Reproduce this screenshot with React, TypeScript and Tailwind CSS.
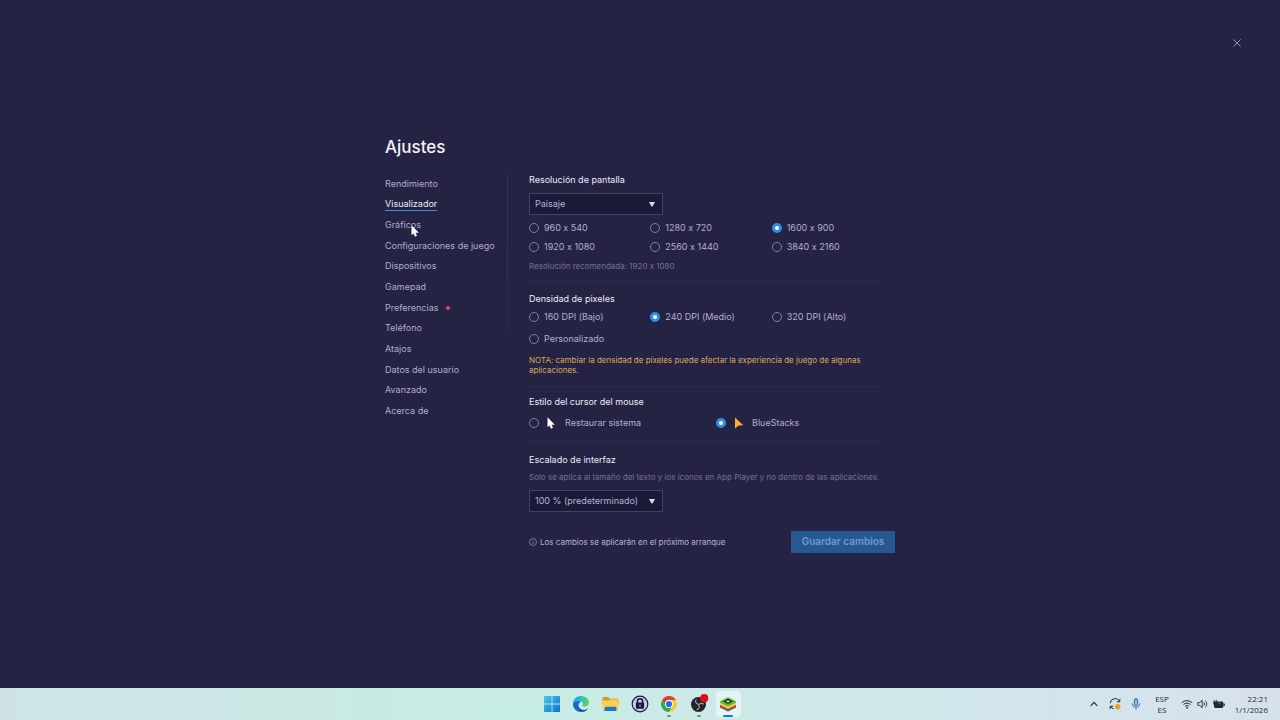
import { useState, type ReactNode } from "react";

const sections = [
  "Rendimiento",
  "Visualizador",
  "Gráficos",
  "Configuraciones de juego",
  "Dispositivos",
  "Gamepad",
  "Preferencias",
  "Teléfono",
  "Atajos",
  "Datos del usuario",
  "Avanzado",
  "Acerca de",
];

function Pointer({ className, fill }: { className: string; fill: string }) {
  return (
    <svg viewBox="0 0 8 12" className={className} aria-hidden="true">
      <path d="M0.5 0.3V10.2L2.6 8.4L4 11.7L6 10.8L4.6 7.7H7.8Z" fill={fill} />
    </svg>
  );
}

function Heading({ children, className = "" }: { children: ReactNode; className?: string }) {
  return <h2 className={`text-[9px] leading-[13px] text-[#eceaf8] ${className}`}>{children}</h2>;
}

function Divider({ className }: { className: string }) {
  return <hr className={`mr-4 h-px border-0 bg-[#2d2b4c] ${className}`} />;
}

type RadioProps = {
  name: string;
  label: string;
  value: string;
  onChange: (v: string) => void;
  icon?: ReactNode;
};

function Radio({ name, label, value, onChange, icon }: RadioProps) {
  return (
    <label className="flex h-[19px] items-center text-[9px] text-[#b0aecf]">
      <input
        type="radio"
        name={name}
        checked={value === label}
        onChange={() => onChange(label)}
        className="size-[10px] shrink-0 appearance-none rounded-full border border-[#8280a3] checked:border-3 checked:border-[#2f8fe6] checked:bg-white"
      />
      {icon}
      <span className={icon ? "ml-[10px]" : "ml-[5px]"}>{label}</span>
    </label>
  );
}

function Dropdown({ label, options, className }: { label: string; options: string[]; className: string }) {
  return (
    <div className={`relative w-[134px] ${className}`}>
      <select
        aria-label={label}
        className="block h-[22px] w-full appearance-none border border-[#413f63] bg-[#1b1938] px-[5px] text-[9px] text-[#b5b3d3]"
      >
        {options.map((o) => (
          <option key={o}>{o}</option>
        ))}
      </select>
      <svg viewBox="0 0 6 5" className="pointer-events-none absolute top-[9px] right-2 h-[5px] w-[6px]" aria-hidden="true">
        <path d="M0 0H6L3.5 4.6H2.5Z" fill="#dcdbee" />
      </svg>
    </div>
  );
}

function Settings() {
  const [resolution, setResolution] = useState("1600 x 900");
  const [dpi, setDpi] = useState("240 DPI (Medio)");
  const [cursor, setCursor] = useState("BlueStacks");
  return (
    <section className="w-full max-w-[510px]">
      <h1 className="mb-[17px] text-[17px] leading-[18px] font-medium text-[#f3f2fb]">Ajustes</h1>
      <div className="flex">
        <nav className="mt-px grid h-[248px] w-[122px] shrink-0 auto-rows-fr text-[9px] leading-[12px] text-[#aeaccf]">
          {sections.map((s) => (
            <div key={s} className="relative flex items-center">
              <a
                href="#"
                className={s === "Visualizador" ? "border-b border-[#2f8fe6] text-[#eceaf8]" : ""}
              >
                {s}
              </a>
              {s === "Preferencias" && <span className="ml-2 size-1 rounded-full bg-[#d9504f]" />}
              {s === "Gráficos" && (
                <Pointer className="absolute top-[10px] left-[26px] h-3 w-2" fill="#ffffff" />
              )}
            </div>
          ))}
        </nav>
        <div className="mt-0.5 h-[156px] w-px shrink-0 bg-linear-to-b from-[#37355a] to-[#2b294b]" />
        <div className="ml-[21px] min-w-0 grow">
          <Heading>Resolución de pantalla</Heading>
          <Dropdown label="Resolución de pantalla" options={["Paisaje", "Retrato"]} className="mt-[7px]" />
          <div className="mt-1 grid w-[364px] grid-cols-3">
            {["960 x 540", "1280 x 720", "1600 x 900", "1920 x 1080", "2560 x 1440", "3840 x 2160"].map((r) => (
              <Radio key={r} name="resolution" label={r} value={resolution} onChange={setResolution} />
            ))}
          </div>
          <p className="mt-[3px] text-[8px] leading-[12px] text-[#716f95]">Resolución recomendada: 1920 x 1080</p>
          <Divider className="mt-[9px]" />
          <Heading className="mt-[10px]">Densidad de pixeles</Heading>
          <div className="mt-[3px] grid w-[364px] grid-cols-3 gap-y-[3px]">
            {["160 DPI (Bajo)", "240 DPI (Medio)", "320 DPI (Alto)", "Personalizado"].map((d) => (
              <Radio key={d} name="dpi" label={d} value={dpi} onChange={setDpi} />
            ))}
          </div>
          <p className="mt-[6px] mr-4 text-[8px] leading-[10px] text-[#dea658]">
            NOTA: cambiar la densidad de píxeles puede afectar la experiencia de juego de algunas aplicaciones.
          </p>
          <Divider className="mt-[11px]" />
          <Heading className="mt-2">Estilo del cursor del mouse</Heading>
          <div className="mt-[6px] grid grid-cols-[187px_1fr]">
            <Radio
              name="cursor"
              label="Restaurar sistema"
              value={cursor}
              onChange={setCursor}
              icon={<Pointer className="ml-2 h-3 w-2" fill="#ffffff" />}
            />
            <Radio
              name="cursor"
              label="BlueStacks"
              value={cursor}
              onChange={setCursor}
              icon={
                <svg viewBox="0 0 8 12" className="ml-2 h-3 w-2 overflow-visible" aria-hidden="true">
                  <path d="M1 0.5L9.3 8.2L4.8 8.4L1 11.5Z" fill="#f3b236" />
                </svg>
              }
            />
          </div>
          <Divider className="mt-2" />
          <Heading className="mt-[11px]">Escalado de interfaz</Heading>
          <p className="mt-[5px] text-[8px] leading-[12px] whitespace-nowrap text-[#716f95]">
            Solo se aplica al tamaño del texto y los íconos en App Player y no dentro de las aplicaciones.
          </p>
          <Dropdown
            label="Escalado de interfaz"
            options={["100 % (predeterminado)", "125 %", "150 %"]}
            className="mt-[7px]"
          />
          <div className="mt-[19px] flex items-center justify-between">
            <p className="flex items-center gap-[3px] text-[8px] text-[#b5b3d3]">
              <svg viewBox="0 0 8 8" className="size-2" fill="none" stroke="#8e8cae" strokeWidth="0.8" aria-hidden="true">
                <circle cx="4" cy="4" r="3.5" />
                <path d="M4 3.5V6M4 2V2.8" />
              </svg>
              Los cambios se aplicarán en el próximo arranque
            </p>
            <button type="button" className="h-[22px] w-[104px] bg-[#275891] text-[10px] font-semibold text-[#6d9bd0]">
              Guardar cambios
            </button>
          </div>
        </div>
      </div>
    </section>
  );
}

function WindowsIcon() {
  return (
    <svg viewBox="0 0 16 16" className="size-4">
      <defs>
        <linearGradient id="win" x1="0" y1="0" x2="1" y2="1">
          <stop offset="0" stopColor="#4cc4f0" />
          <stop offset="1" stopColor="#0a72cc" />
        </linearGradient>
      </defs>
      <path d="M0 0H7.6V7.6H0ZM8.4 0H16V7.6H8.4ZM0 8.4H7.6V16H0ZM8.4 8.4H16V16H8.4Z" fill="url(#win)" />
    </svg>
  );
}

function EdgeIcon() {
  return (
    <svg viewBox="0 0 16 16" className="size-4">
      <defs>
        <linearGradient id="edgeTop" x1="0" y1="0.3" x2="1" y2="0.5">
          <stop offset="0" stopColor="#1a9fe0" />
          <stop offset="0.55" stopColor="#2cc3c4" />
          <stop offset="1" stopColor="#63d64e" />
        </linearGradient>
      </defs>
      <path d="M0 8C0 3.4 3.6 0 8 0C12.8 0 16 3.2 16 6.6C16 9.2 14 10.7 11.8 10.7C9.6 10.7 9 9.9 9.5 9C10.6 7 9 4.8 6.2 4.8C3.2 4.8 0.8 6.3 0 8Z" fill="url(#edgeTop)" />
      <path d="M0 8C0.6 6 2.9 4.8 5.8 4.9C7 5 7.8 5.4 8.4 6C6.6 6 5.4 7.5 5.4 9.4C5.4 12.2 8 14.2 11 14C12.7 13.8 13.6 13.3 14.7 12.4C13.2 14.7 10.8 16 8 16C3.5 16 0 12.5 0 8Z" fill="#1769c4" />
      <path d="M5.8 8C4.8 10.8 6.8 14 10.8 14C12.7 13.9 13.6 13.3 14.7 12.4C14 13.8 12.6 15 11 15.5C6.8 15.8 3.8 12.2 5.8 8Z" fill="#124a97" />
    </svg>
  );
}

function FolderIcon() {
  return (
    <svg viewBox="0 0 17 16" className="h-4 w-[17px]">
      <path d="M0.5 2.2Q0.5 1 1.7 1H6L7.8 2.8H15.3Q16.5 2.8 16.5 4V8H0.5Z" fill="#d99a1e" />
      <path d="M0.5 4.6H7L8.5 3.4H16.5V13.5Q16.5 14.7 15.3 14.7H1.7Q0.5 14.7 0.5 13.5Z" fill="#fbcf52" />
      <path d="M2.6 15V12.2Q2.6 10.8 4 10.8H13Q14.4 10.8 14.4 12.2V15Z" fill="#1d76c9" />
    </svg>
  );
}

function LockIcon() {
  return (
    <svg viewBox="0 0 18 18" className="size-[18px]">
      <circle cx="9" cy="9" r="7.8" fill="#c7d0ef" stroke="#1c2142" strokeWidth="1.2" />
      <path d="M6.4 8V6.2Q6.4 3.7 9 3.7Q11.6 3.7 11.6 6.2V8" fill="none" stroke="#171b35" strokeWidth="1.6" />
      <rect x="4.9" y="7.6" width="8.2" height="6.2" rx="0.8" fill="#171b35" />
      <path d="M9 9.5V11.8" stroke="#c7d0ef" strokeWidth="1" />
    </svg>
  );
}

function ChromeIcon() {
  return (
    <svg viewBox="0 0 16 16" className="size-4">
      <circle cx="8" cy="8" r="8" fill="#fff" />
      <path d="M1.07 4A8 8 0 0 1 14.93 4H8A4 4 0 0 0 4.54 10Z" fill="#e33b2e" />
      <path d="M14.93 4A8 8 0 0 1 8 16L11.46 10A4 4 0 0 0 8 4Z" fill="#fcc934" />
      <path d="M8 16A8 8 0 0 1 1.07 4L4.54 10A4 4 0 0 0 11.46 10Z" fill="#2da94f" />
      <circle cx="8" cy="8" r="3.9" fill="#fff" />
      <circle cx="8" cy="8" r="3.1" fill="#1a73e8" />
    </svg>
  );
}

function ObsIcon() {
  return (
    <svg viewBox="0 0 18 18" className="size-[18px] overflow-visible">
      <circle cx="8.5" cy="9.5" r="7.5" fill="#24252b" />
      <g fill="none" stroke="#a3a6ae" strokeWidth="1.1" strokeLinecap="round">
        <path d="M6 4.8C4.8 6.8 6 8.8 8.3 9.2" />
        <path d="M13.4 9C11.4 7.8 9.4 8.6 8.7 10" />
        <path d="M7 14.6C9.2 14.2 9.8 12 8.7 10.2" />
      </g>
      <circle cx="14.2" cy="3.2" r="4.1" fill="#e30b17" />
    </svg>
  );
}

function BlueStacksIcon() {
  return (
    <svg viewBox="0 0 18 18" className="size-[18px]">
      <path d="M1 11.6L9 8L17 11.6V12.6L9 16.6L1 12.6Z" fill="#1d5fa5" />
      <path d="M1 10L9 6L17 10V11.6L9 15.6L1 11.6Z" fill="#e2392f" />
      <path d="M1 8.2L9 4.2L17 8.2V9.8L9 13.8L1 9.8Z" fill="#f6d32c" />
      <path d="M1 6.2L9 2.2L17 6.2V7.6L9 11.6L1 7.6Z" fill="#5cb83a" />
      <path d="M3.8 6.4L9 3.8L14.2 6.4L9 9Z" fill="#243a2b" />
      <path d="M7 6.4L9 5.4L11 6.4L9 7.4Z" fill="#dfeedd" />
    </svg>
  );
}

type App = { name: string; icon: ReactNode; mark?: string; active?: boolean };

const apps: App[] = [
  { name: "Inicio", icon: <WindowsIcon /> },
  { name: "Edge", icon: <EdgeIcon /> },
  { name: "Explorador de archivos", icon: <FolderIcon /> },
  { name: "Bloqueo", icon: <LockIcon /> },
  { name: "Chrome", icon: <ChromeIcon />, mark: "w-1 bg-[#7d8f92]" },
  { name: "OBS", icon: <ObsIcon />, mark: "w-1 bg-[#7d8f92]" },
  { name: "BlueStacks", icon: <BlueStacksIcon />, mark: "w-[10px] bg-[#1977c4]", active: true },
];

function Taskbar() {
  return (
    <footer className="grid h-8 shrink-0 grid-cols-[1fr_auto_1fr] items-center bg-linear-to-r from-[#cfe3e6] via-[#c7ede4] via-40% to-[#d7e1ee] font-['Open_Sans',sans-serif] text-[#1f2a33]">
      <div />
      <div className="grid w-[206px] grid-cols-7 justify-items-center">
        {apps.map((a) => (
          <button
            key={a.name}
            type="button"
            aria-label={a.name}
            className={`relative flex h-[26px] w-[25px] items-center justify-center rounded-sm ${a.active ? "bg-[#e2f5f2]" : ""}`}
          >
            {a.icon}
            {a.mark && (
              <span className={`absolute bottom-0 left-1/2 h-0.5 -translate-x-1/2 rounded-full ${a.mark}`} />
            )}
          </button>
        ))}
      </div>
      <div className="flex items-center justify-end pr-3 text-[8px]">
        <svg viewBox="0 0 8 8" className="size-2" fill="none" stroke="currentColor" strokeWidth="1.1" aria-hidden="true">
          <path d="M0.8 5.8L4 2.4L7.2 5.8" />
        </svg>
        <svg viewBox="0 0 12 12" className="ml-[11px] size-3" fill="none" stroke="currentColor" strokeWidth="1" aria-hidden="true">
          <path d="M1.2 5.2A4.8 4.8 0 0 1 10.4 3.6M10.8 0.8V3.8H7.8M1.2 11V8.2H4.2M1.4 8.4A5 5 0 0 0 4.6 10.8" />
          <circle cx="8.8" cy="8.8" r="2.7" fill="#f09a1c" stroke="none" />
        </svg>
        <svg viewBox="0 0 10 12" className="ml-[10px] h-3 w-[10px]" fill="none" stroke="#2b6cad" strokeWidth="1" aria-hidden="true">
          <rect x="3.3" y="0.6" width="3.4" height="6.6" rx="1.7" fill="#8fbbe3" />
          <path d="M1.3 5.4A3.7 3.7 0 0 0 8.7 5.4M5 9.2V11.6" />
        </svg>
        <span className="ml-[13px] w-4 text-center leading-[11px]">
          ESP
          <br />
          ES
        </span>
        <svg viewBox="0 0 12 10" className="ml-[11px] h-[10px] w-3" fill="none" stroke="currentColor" strokeWidth="1" aria-hidden="true">
          <path d="M0.8 3.8A7.4 7.4 0 0 1 11.2 3.8M2.5 5.6A5 5 0 0 1 9.5 5.6M4.2 7.3A2.6 2.6 0 0 1 7.8 7.3" />
          <circle cx="6" cy="8.8" r="0.9" fill="currentColor" stroke="none" />
        </svg>
        <svg viewBox="0 0 11 10" className="ml-1 h-[10px] w-[11px]" fill="none" stroke="currentColor" strokeWidth="0.9" aria-hidden="true">
          <path d="M0.8 3.6H2.6L5.2 1.2V8.8L2.6 6.4H0.8ZM6.8 3.4A2.2 2.2 0 0 1 6.8 6.6M8.4 1.8A4.4 4.4 0 0 1 8.4 8.2" />
        </svg>
        <svg viewBox="0 0 12 10" className="ml-[5px] h-[10px] w-3" aria-hidden="true">
          <rect x="1" y="2.6" width="9.4" height="6.4" rx="1.4" fill="currentColor" />
          <rect x="10.6" y="4.6" width="1.2" height="2.4" fill="currentColor" />
          <path d="M1.2 0.8V3.2M3.4 0.8V3.2M0.6 3.2H4V4.6Q4 6 2.3 6Q0.6 6 0.6 4.6Z" fill="currentColor" stroke="currentColor" strokeWidth="0.8" />
          <path d="M5.6 4.8L7.2 3.6" stroke="#d5e5ed" strokeWidth="0.6" />
        </svg>
        <time className="w-[43px] text-right leading-[11px]">
          22:21
          <br />
          1/1/2026
        </time>
      </div>
    </footer>
  );
}

export default function App() {
  return (
    <div className="relative flex min-h-screen flex-col bg-[#252344] font-['Inter',sans-serif] [font-feature-settings:'calt'_0]">
      <button type="button" aria-label="Cerrar" className="absolute top-[38px] right-[38px] flex size-[10px] items-center justify-center">
        <svg viewBox="0 0 8 8" className="size-2" stroke="#b4b2cf" strokeWidth="0.8" aria-hidden="true">
          <path d="M0.4 0.4L7.6 7.6M7.6 0.4L0.4 7.6" />
        </svg>
      </button>
      <main className="flex grow items-center justify-center pt-0.5">
        <Settings />
      </main>
      <Taskbar />
    </div>
  );
}
